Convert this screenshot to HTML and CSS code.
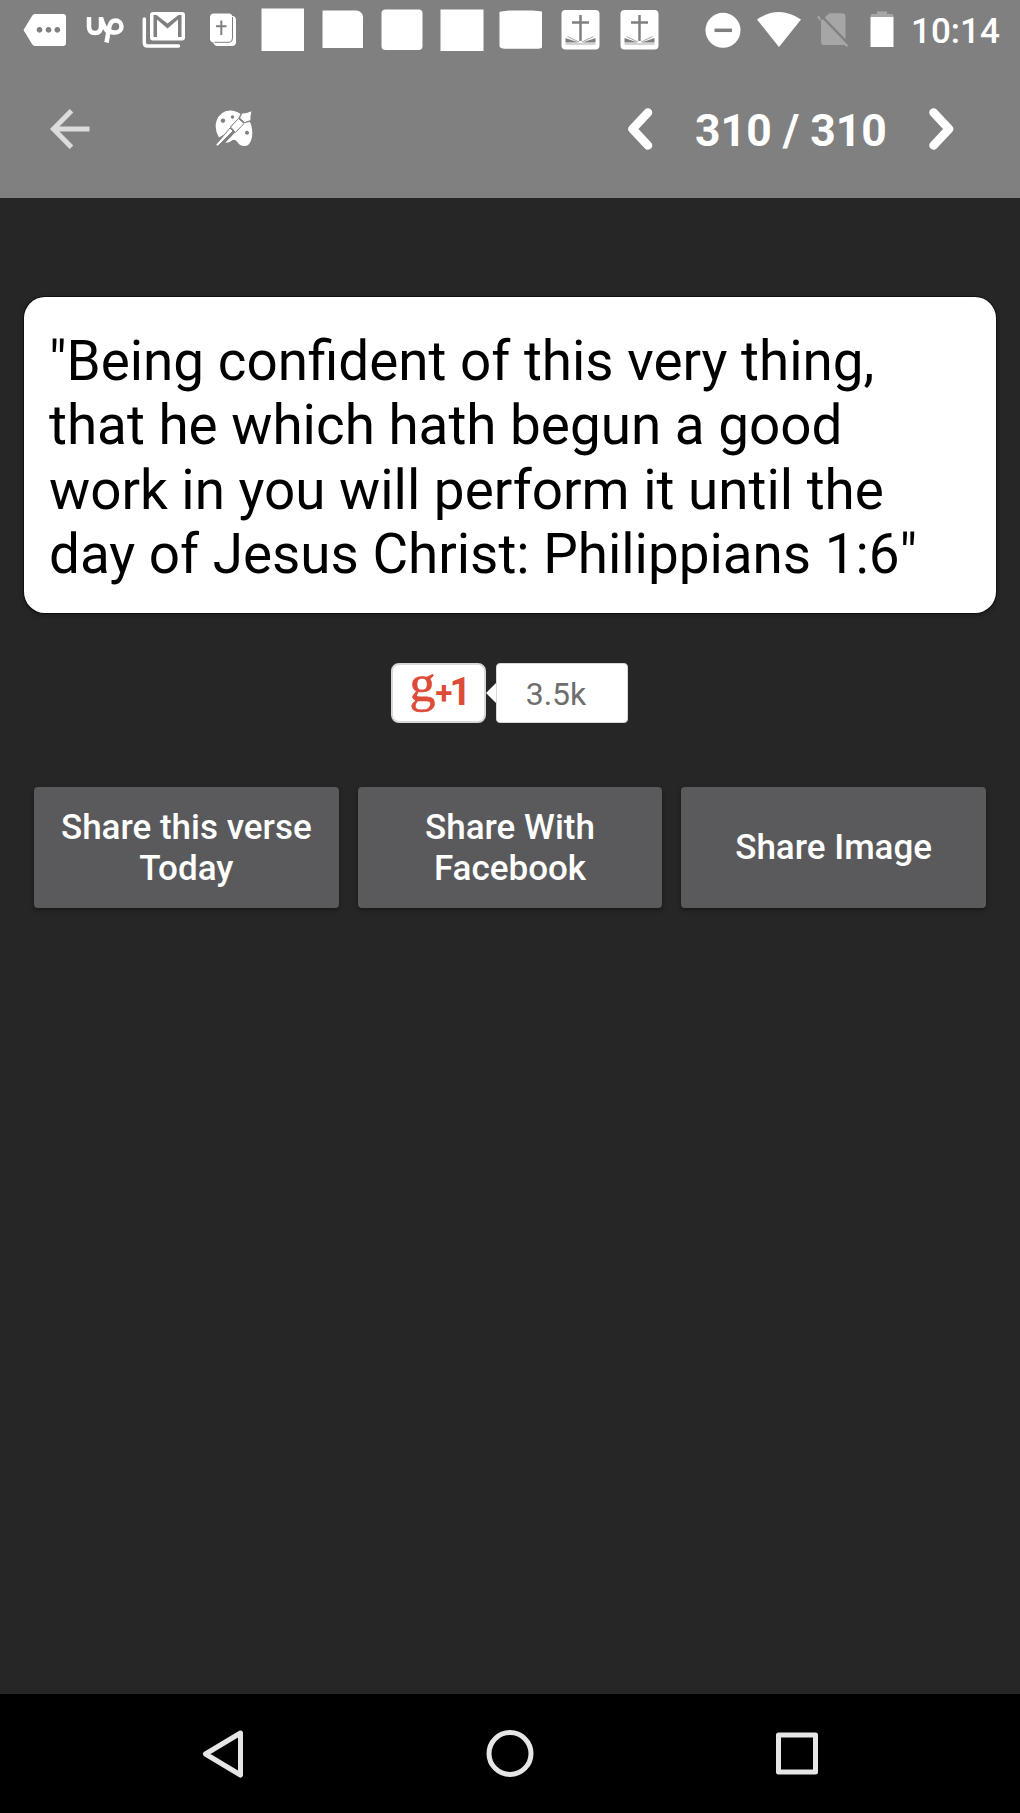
FILE: index.html
```html
<!DOCTYPE html>
<html lang="en">
<head>
    <meta charset="utf-8">
    <meta name="viewport" content="width=device-width, initial-scale=1.0">
    <title>Daily Verse</title>
    <link rel="stylesheet" href="styles.css">
</head>
<body>
    <div id="wrap">
        <header class="header">
            <div class="status-bar">
                <ul class="notice">
                    <li><svg viewBox="0 0 59.5 60"><path fill="#fff" fill-rule="evenodd" d="M20 14H48Q51 14 51 17V43Q51 46 48 46H20Q18 46 17 44L8.500 30L17 16Q18 14 20 14ZM24.500 27a2.900 2.900 0 1 0 .01 0ZM33.500 27a2.900 2.900 0 1 0 .01 0ZM42.300 27a2.900 2.900 0 1 0 .01 0Z"/></svg></li>
                    <li><svg viewBox="0 0 59.5 60"><path class="line up" d="M14 17V26.500Q14 33 20 33T26 26.500V17M26 18Q29 28 33 32M31.500 42.500L34.500 26Q36 20.500 40.500 20.500A5.800 5.800 0 0 1 40.500 32.500Q36 33 33.500 30"/></svg></li>
                    <li><svg viewBox="0 0 59.5 60"><path fill="#fff" fill-rule="evenodd" d="M19 12H48Q51 12 51 15V37.500Q51 40.500 48 40.500H19Q16 40.500 16 37.500V15Q16 12 19 12ZM19.500 15V37H23V19.500L33.500 28.500L44 19.500V37H47.500V15H44.500L33.500 23.500L22.500 15Z"/><path class="line" stroke-width="3.500" d="M10.300 19V42.500Q10.300 46 13.500 46H44.500"/></svg></li>
                    <li><svg viewBox="0 0 59.5 60"><rect x="19.500" y="16" width="22.500" height="30" rx="4" fill="#fff"/><rect x="16" y="13.500" width="22.500" height="29" rx="4" fill="#fff"/><path d="M20.500 42.300H35.500Q38.500 42 38.500 38V17" fill="none" stroke="#808080"/><path d="M27.300 20.500V35M22 26.300H32.500" stroke="#808080" stroke-width="2"/></svg></li>
                    <li><svg viewBox="0 0 59.5 60"><path fill="#fff" d="M8.500 8.500H51V51H8.500Z"/></svg></li>
                    <li><svg viewBox="0 0 59.5 60"><path fill="#fff" d="M9.500 10.500H44Q50 12 50 17V48H9.500Z"/></svg></li>
                    <li><svg viewBox="0 0 59.5 60"><rect x="9.500" y="9.500" width="41" height="40.500" rx="4" fill="#fff"/></svg></li>
                    <li><svg viewBox="0 0 59.5 60"><path fill="#fff" d="M8.500 9.500H51.500V51H8.500Z"/></svg></li>
                    <li><svg viewBox="0 0 59.5 60"><path fill="#fff" d="M10 11.500L18 10.500H42L51 11.500V47Q51 48.500 47 48.700H14Q8.500 48.500 8.500 46V12Z"/></svg></li>
                    <li><svg viewBox="0 0 59.5 60"><use href="#book-cross"/></svg></li>
                    <li><svg viewBox="0 0 59.5 60"><use href="#book-cross"/></svg></li>
                </ul>
                <div class="system">
                    <svg width="36" height="60" viewBox="0 0 36 60"><circle cx="18" cy="30.300" r="17.500" fill="#fff"/><path stroke="#808080" stroke-width="3.500" d="M9.500 30.300H27"/></svg>
                    <svg width="44" height="60" viewBox="0 0 44 60"><path fill="#fff" d="M0 19.500Q22 4.500 44 19.500L22 47Z"/></svg>
                    <svg width="32" height="60" viewBox="0 0 32 60"><path fill="#a6a6a6" d="M4.500 20.500L11 14.500Q12 13.300 14 13.300H25Q28.500 13.300 28.500 16.500V42L31.500 45L29.500 47L27.500 45H7Q4 45 4 42V21L0 17.500L2 15.500Z"/><path stroke="#808080" stroke-width="2.500" d="M3 14.500L31.500 44"/></svg>
                    <svg width="24" height="60" viewBox="0 0 24 60"><path fill="#a6a6a6" d="M7 11.500H17V14H22Q23.500 14 23.500 17H.500Q.500 14 2 14H7Z"/><path fill="#fff" d="M.500 17H23.500V47H.500Z"/></svg>
                    <span class="clock">10:14</span>
                </div>
            </div>
            <nav class="tool-bar">
                <button type="button" class="btn-back" aria-label="Back"><svg width="40" height="40" viewBox="0 0 40 40"><path fill="none" stroke="#dcdcdc" stroke-width="5" d="M39.500 20H4M21.500 1.700L3.500 20L21.500 38.300"/></svg></button>
                <button type="button" class="btn-theme" aria-label="Theme">
                    <svg width="38" height="38" viewBox="0 0 38 38">
                        <path fill="#fff" fill-rule="evenodd" d="M4 27.500Q-1 19 1.500 11Q5 1 15 .500Q21 .500 25.500 4L23 9L15 17L16.500 20ZM8 8.500a2.200 2.200 0 1 0 .01 0ZM17.500 5.300a1.700 1.700 0 1 0 .01 0Z"/>
                        <path fill="#fff" fill-rule="evenodd" d="M10.500 32.500L20.500 22L29 13L35 12Q38 18 37 27Q35 36 30 36Q25 36.500 22 31.500Q19 28 15.500 31.500Q13 33 10.500 32.500ZM32 20.800a2 2 0 1 0 .01 0Z"/>
                        <path fill="#fff" stroke="#808080" stroke-width="1" d="M1 34.500L15 18L18 21L3 36Q1 37 1 34.500ZM15.500 17L23.500 8.500L29 13.500L20.500 22.500ZM24.500 8L27 3Q31 3.500 37 .500Q35.500 7 36 10.500L29.500 12.500Z"/>
                    </svg>
                </button>
                <div class="pager">
                    <button type="button" aria-label="Previous"><svg width="26" height="44" viewBox="0 0 26 44"><path class="line chevron" d="M20 5.500L4.500 22L20 38.500"/></svg></button>
                    <strong>310 / 310</strong>
                    <button type="button" aria-label="Next"><svg width="26" height="44" viewBox="0 0 26 44"><path class="line chevron" d="M5.500 5.500L21 22L5.500 38.500"/></svg></button>
                </div>
            </nav>
        </header>

        <main class="content">
            <p class="verse">"Being confident of this very thing,<br>that he which hath begun a good<br>work in you will perform it until the<br>day of Jesus Christ: Philippians 1:6"</p>
            <div class="plus-one">
                <button type="button" class="btn-plus"><span class="g">g</span><span class="plus">+</span><span class="one">1</span></button>
                <svg width="10" height="22" viewBox="0 0 10 22"><path fill="#fff" d="M10 1V21L0 11Z"/></svg>
                <span class="count">3.5k</span>
            </div>
            <div class="share">
                <button type="button">Share this verse<br>Today</button>
                <button type="button">Share With<br>Facebook</button>
                <button type="button">Share Image</button>
            </div>
        </main>

        <footer class="nav-bar">
            <svg width="42" height="50" viewBox="0 0 42 50"><path class="key" d="M38.500 4L3.500 25L38.500 46Z"/></svg>
            <svg width="48" height="50" viewBox="0 0 48 50"><circle class="key" cx="24" cy="24.500" r="21"/></svg>
            <svg width="42" height="50" viewBox="0 0 42 50"><rect class="key" x="2.500" y="6" width="37" height="37"/></svg>
        </footer>
    </div>

    <svg width="0" height="0" class="defs">
        <symbol id="book-cross" viewBox="0 0 59.5 60">
            <rect x="10.500" y="10" width="38" height="39.500" rx="4" fill="#fff"/>
            <path stroke="#808080" stroke-width="2.500" d="M29.500 15V41M21 22.500H38"/>
            <path fill="#808080" d="M14.500 38L27.500 42.500H14.500ZM44.500 38L31.500 42.500H44.500Z"/>
            <path fill="none" stroke="#909090" stroke-width=".8" d="M16.500 36.500L28 42M42.500 36.500L31 42M14.500 44H44.500"/>
        </symbol>
    </svg>
</body>
</html>
```
FILE: styles.css
```css
@charset 'utf-8';
html,body,p,ul,li,button { margin:0; padding:0; }
body { background-color:#262626; font-family:Roboto, 'Noto Sans', sans-serif; color:#fff; }
ul { list-style:none; }
svg { display:block; flex:none; }
button { border:0; background:none; color:inherit; font-family:inherit; cursor:pointer; }
.defs { display:none; }

#wrap { display:flex; flex-direction:column; width:1020px; height:1813px; overflow:hidden; }

/* header */
.header { height:198px; background-color:#808080; }
.line { fill:none; stroke:#fff; stroke-linecap:round; stroke-linejoin:round; }
.line.up { stroke-width:4.5; stroke-linecap:butt; }
.line.chevron { stroke-width:8.5; }
.status-bar { display:flex; justify-content:space-between; height:60px; padding:0 21px 0 15px; }
.notice { display:flex; }
.notice svg { width:59.5px; height:60px; }
.system { display:flex; }
.system svg { margin-right:16px; }
.system svg:nth-child(3) { margin-right:21px; }
.system svg:nth-child(4) { margin-right:17px; }
.clock { width:88px; font-size:35px; font-weight:500; line-height:63px; white-space:nowrap; }
.tool-bar { display:flex; align-items:center; height:138px; box-sizing:border-box; padding:0 66px 0 50px; }
.btn-theme { margin-left:125px; }
.pager { display:flex; align-items:center; margin-left:auto; }
.pager strong { width:192px; margin:4px 41px 0; font-size:44.5px; line-height:50px; text-align:center; white-space:nowrap; }

/* verse */
.content { flex:1; padding:99px 24px 0; }
.verse { height:316px; padding:32px 25px 0; box-sizing:border-box; border-radius:21px; background-color:#fff; color:#000; font-size:54.8px; line-height:64.3px; white-space:nowrap; box-shadow:0 0 0 1px #101010, 0 2px 5px rgba(0,0,0,.4); }

.plus-one { display:flex; align-items:center; justify-content:center; height:60px; margin-top:50px; padding-right:2px; }
.btn-plus { display:flex; align-items:center; width:95px; height:60px; padding-left:16px; box-sizing:border-box; border:2px solid #d8d8d8; border-radius:8px; background-color:#fff; color:#dd4b39; }
.btn-plus .g { width:28px; margin-top:-19px; font-family:'Liberation Serif', serif; font-size:52px; line-height:40px; -webkit-text-stroke:.6px #dd4b39; }
.btn-plus .plus { width:15px; font-size:31px; font-weight:700; margin-left:-1px; }
.btn-plus .one { font-size:38px; font-weight:700; line-height:40px; margin:-2px 0 0 -1px; }
.count { width:132px; height:60px; padding-right:11px; box-sizing:border-box; border:1px solid #d8d8d8; border-radius:4px; background-color:#fff; color:#6e6e6e; font-size:32px; line-height:60px; text-align:center; }

.share { display:grid; grid-template-columns:repeat(3, 1fr); gap:19px; margin-top:64px; padding:0 10px; }
.share button { height:121px; padding-top:2px; border-radius:4px; background-color:#5a5a5c; font-size:35px; font-weight:500; line-height:40.5px; box-shadow:0 2px 4px rgba(0,0,0,.4); }

/* navigation keys */
.nav-bar { display:flex; align-items:center; justify-content:space-between; height:119px; box-sizing:border-box; padding:0 202px; background-color:#000; }
.key { fill:none; stroke:#e6e6e6; stroke-width:5; stroke-linejoin:round; }
```
